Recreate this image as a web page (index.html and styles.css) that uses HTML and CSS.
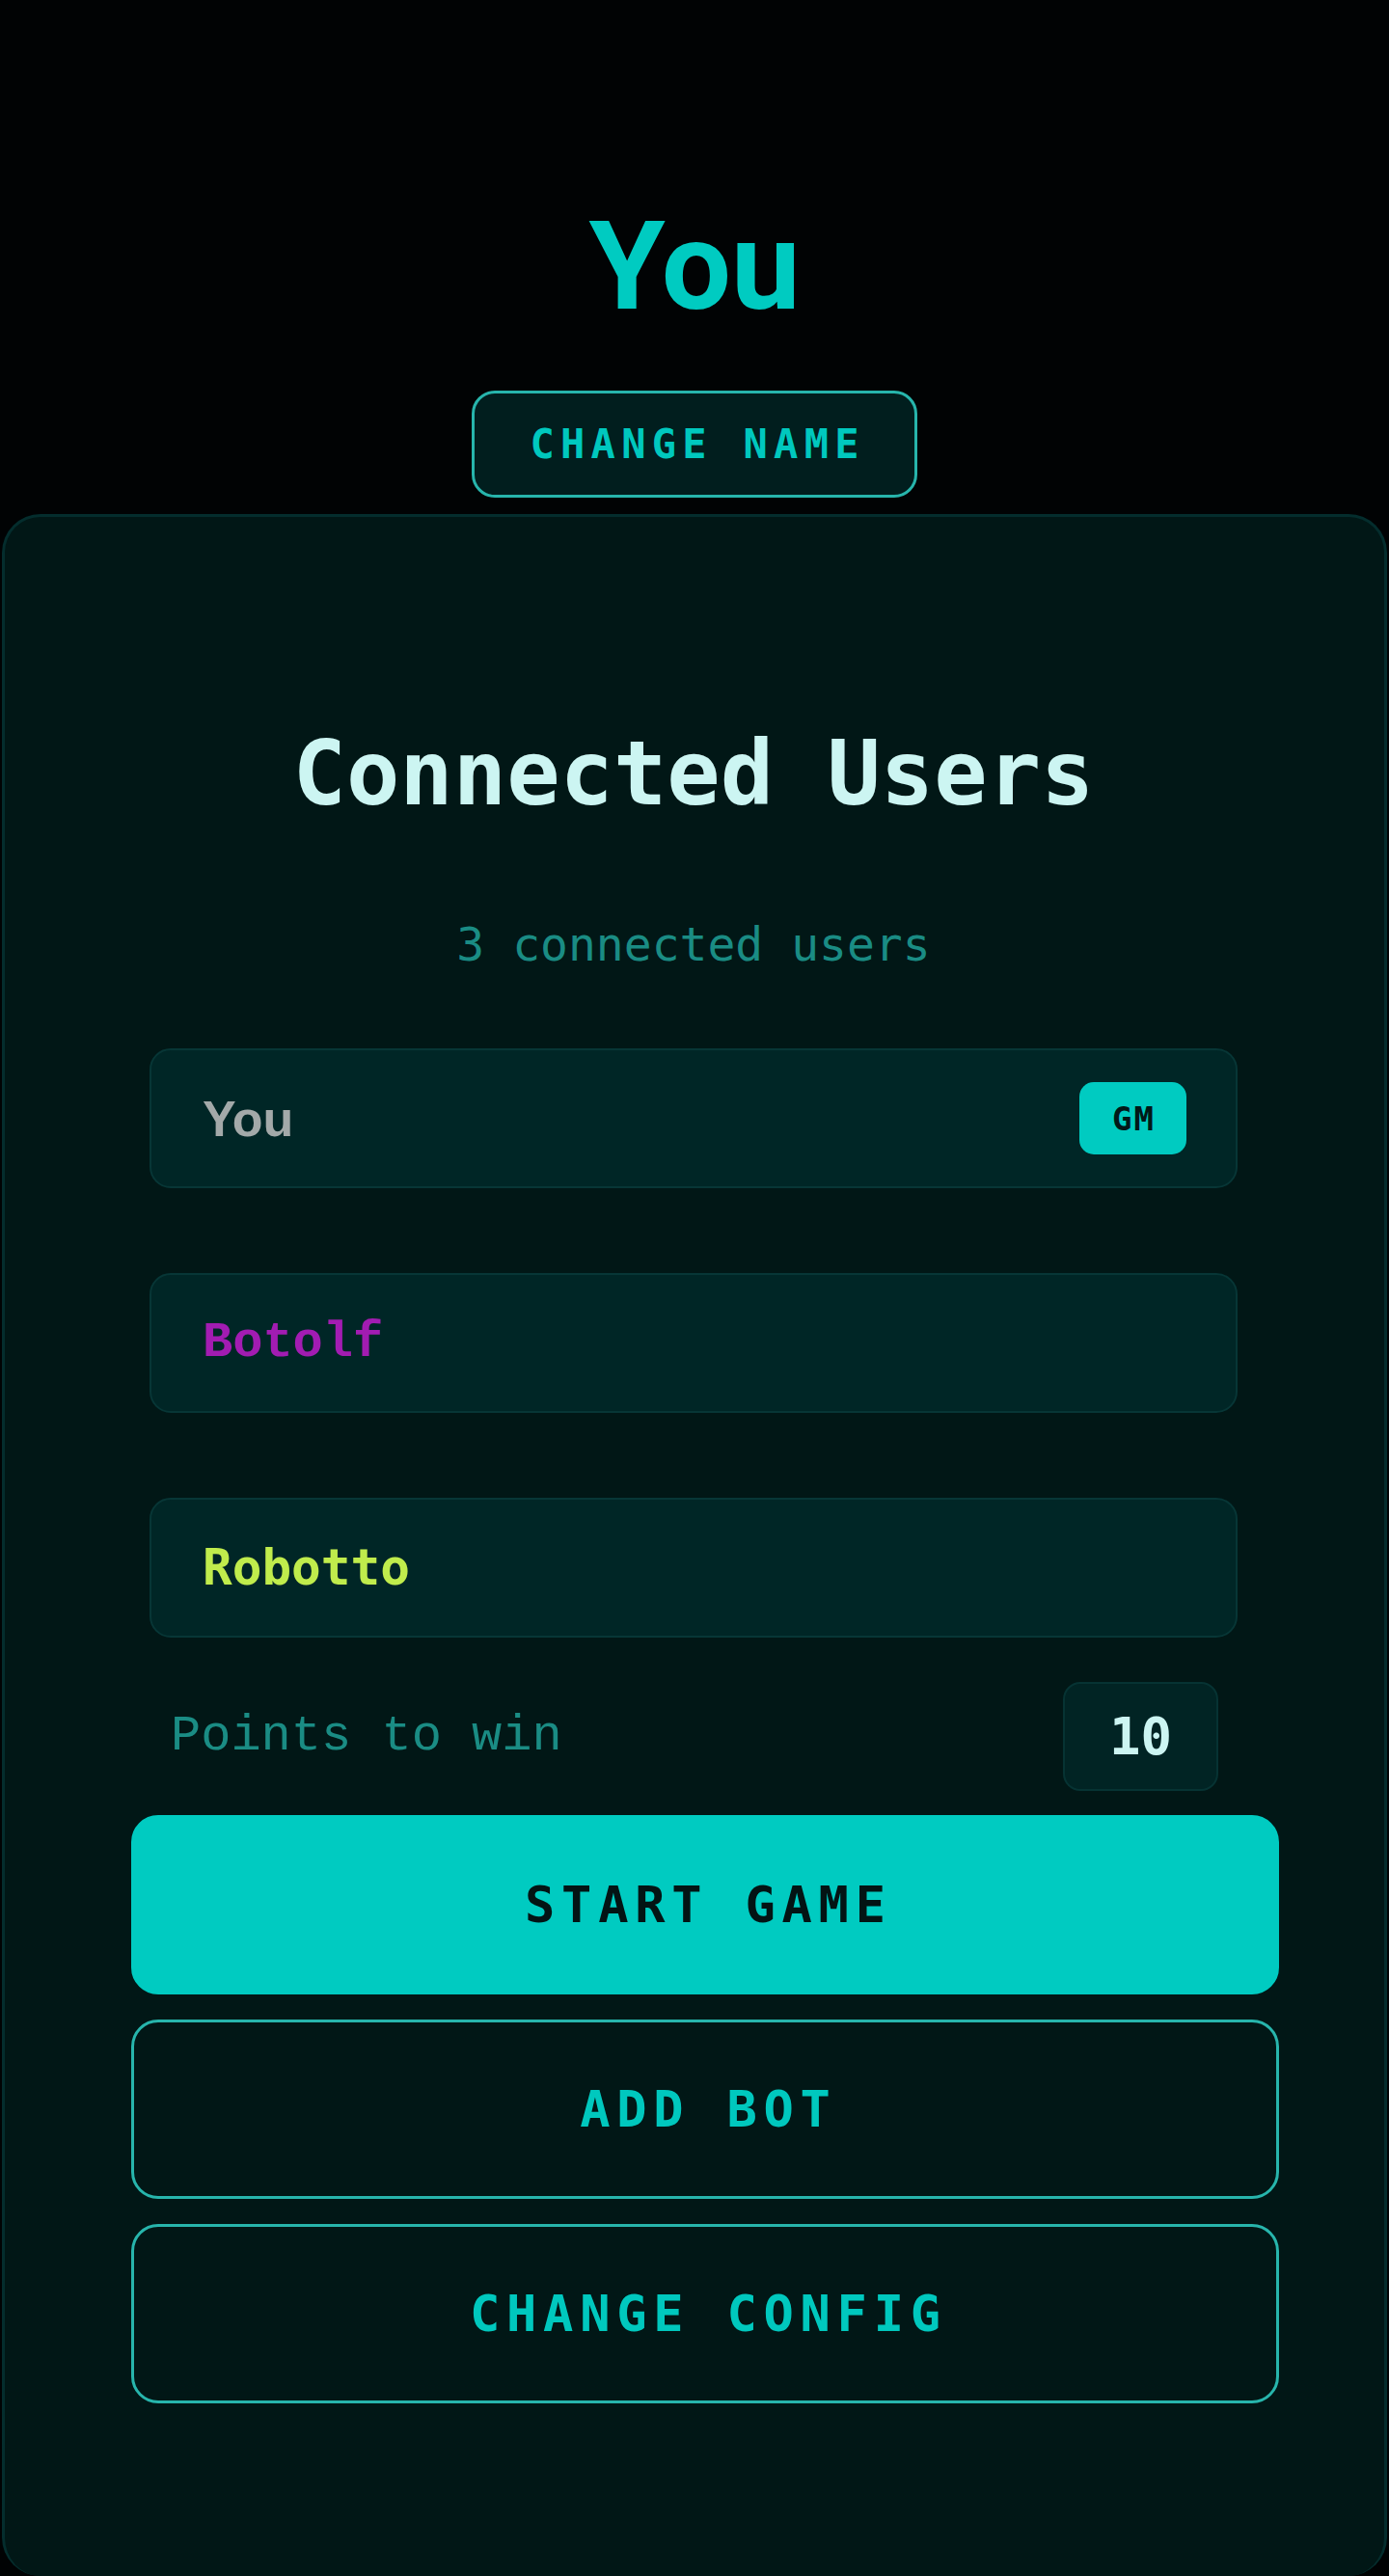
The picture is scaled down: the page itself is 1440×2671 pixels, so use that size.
FILE: index.html
```html
<!DOCTYPE html>
<html lang="en">
<head>
<meta charset="utf-8">
<title>Lobby</title>
<link rel="stylesheet" href="styles.css">
</head>
<body>
<main class="page">
  <header class="profile">
    <h1 class="profile-name">You</h1>
    <button class="btn-change-name" type="button">CHANGE NAME</button>
  </header>

  <section class="lobby">
    <h2 class="lobby-title">Connected Users</h2>
    <p class="lobby-count">3 connected users</p>

    <ul class="user-list">
      <li class="user-row">
        <span class="user-name user-you">You</span>
        <span class="badge-gm">GM</span>
      </li>
      <li class="user-row">
        <span class="user-name user-botolf">Botolf</span>
      </li>
      <li class="user-row">
        <span class="user-name user-robotto">Robotto</span>
      </li>
    </ul>

    <div class="points-row">
      <span class="points-label">Points to win</span>
      <span class="points-value">10</span>
    </div>

    <div class="actions">
      <button class="btn btn-primary" type="button">START GAME</button>
      <button class="btn btn-outline" type="button">ADD BOT</button>
      <button class="btn btn-outline" type="button">CHANGE CONFIG</button>
    </div>
  </section>
</main>
</body>
</html>
```

FILE: styles.css
```css
* {
  box-sizing: border-box;
}

html, body {
  margin: 0;
  padding: 0;
  background: #010304;
}

body {
  font-family: "DejaVu Sans Mono", monospace;
  color: #ccf5f2;
}

.page {
  width: 1440px;
  min-height: 2671px;
  display: flex;
  flex-direction: column;
  align-items: center;
}

.profile {
  display: flex;
  flex-direction: column;
  align-items: center;
  padding-top: 212px;
}

.profile-name {
  margin: 0;
  font-family: "Roboto", "Liberation Sans", sans-serif;
  font-weight: 700;
  font-size: 128px;
  line-height: 128px;
  color: #00cbc1;
}

.btn-change-name {
  margin-top: 65px;
  width: 462px;
  height: 111px;
  border: 3px solid #27b5ac;
  border-radius: 24px;
  background: #011e1e;
  color: #00c8be;
  font-family: "DejaVu Sans Mono", monospace;
  font-weight: 700;
  font-size: 42px;
  letter-spacing: 0.15em;
  padding: 0 0 0 0.15em;
  cursor: pointer;
}

.lobby {
  margin-top: 17px;
  width: 1436px;
  height: 2138px;
  background: #011716;
  border: 3px solid #042d2d;
  border-bottom: none;
  border-radius: 40px;
  padding: 220px 152px 0 150px;
  display: flex;
  flex-direction: column;
}

.lobby-title {
  margin: 0;
  text-align: center;
  font-family: "DejaVu Sans Mono", monospace;
  font-weight: 700;
  font-size: 92px;
  line-height: 93px;
  color: #ccf5f2;
}

.lobby-count {
  margin: 106px 0 0;
  text-align: center;
  font-family: "DejaVu Sans Mono", monospace;
  font-weight: 400;
  font-size: 48px;
  line-height: 48px;
  color: #1a8c84;
}

.user-list {
  list-style: none;
  margin: 84px 0 0;
  padding: 0;
  display: flex;
  flex-direction: column;
  gap: 88px;
}

.user-row {
  height: 145px;
  display: flex;
  align-items: center;
  justify-content: space-between;
  padding: 0 51px 0 53px;
  background: #002626;
  border: 2px solid #073636;
  border-radius: 22px;
}

.user-name {
  font-weight: 700;
  font-size: 50px;
  line-height: 1;
}

.user-you {
  font-family: "Liberation Sans", sans-serif;
  font-size: 52px;
  color: #a3a9a9;
}

.user-botolf {
  font-family: "Liberation Mono", monospace;
  font-size: 52px;
  color: #a21cb2;
}

.user-robotto {
  font-family: "DejaVu Sans Mono", monospace;
  font-size: 51px;
  color: #c0ec4c;
}

.badge-gm {
  width: 111px;
  height: 75px;
  display: flex;
  align-items: center;
  justify-content: center;
  background: #00cbc1;
  border-radius: 15px;
  color: #021818;
  font-family: "DejaVu Sans Mono", monospace;
  font-weight: 700;
  font-size: 34px;
  letter-spacing: 0.06em;
  padding-left: 0.06em;
}

.points-row {
  margin-top: 46px;
  display: flex;
  align-items: center;
  justify-content: space-between;
  padding: 0 20px 0 22px;
}

.points-label {
  font-family: "Liberation Mono", monospace;
  font-size: 52px;
  color: #1a8c84;
}

.points-value {
  width: 161px;
  height: 113px;
  display: flex;
  align-items: center;
  justify-content: center;
  background: #012424;
  border: 2px solid #063333;
  border-radius: 18px;
  font-family: "DejaVu Sans Mono", monospace;
  font-weight: 700;
  font-size: 54px;
  color: #ccf5f2;
}

.actions {
  margin: 25px -43px 0 -19px;
  display: flex;
  flex-direction: column;
  gap: 26px;
}

.btn {
  height: 186px;
  border-radius: 28px;
  font-family: "DejaVu Sans Mono", monospace;
  font-weight: 700;
  font-size: 52px;
  letter-spacing: 0.13em;
  padding: 0 0 0 0.13em;
  cursor: pointer;
}

.btn-primary {
  background: #00cbc1;
  border: 3px solid #00cbc1;
  color: #031414;
}

.btn-outline {
  background: transparent;
  border: 3px solid #27b5ac;
  color: #00c8be;
}
```
